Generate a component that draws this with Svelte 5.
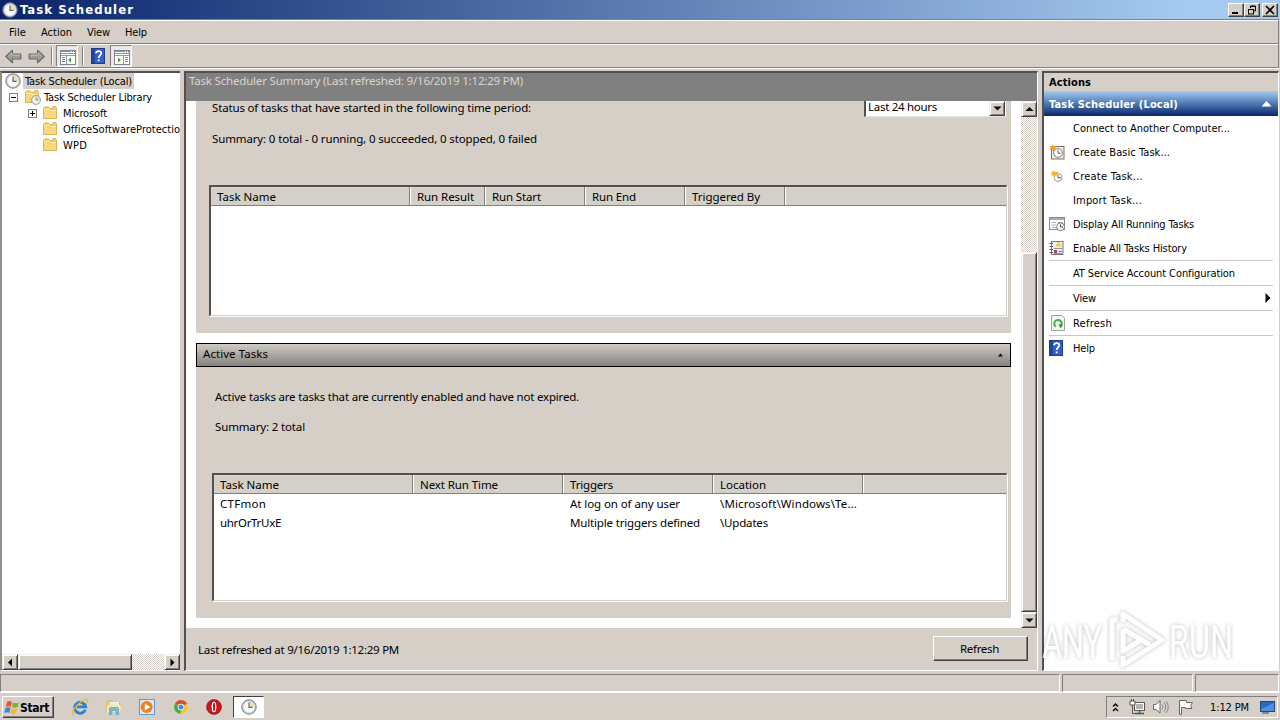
<script lang="ts">
    let selected = $state('Task Scheduler (Local)');

    const menus = [
        { label: 'File', w: 17 },
        { label: 'Action', w: 31 },
        { label: 'View', w: 23 },
        { label: 'Help', w: 22 }
    ];

    const folders = [
        { label: 'Microsoft', w: 44, plus: true },
        { label: 'OfficeSoftwareProtectio', w: 117, plus: false },
        { label: 'WPD', w: 24, plus: false }
    ];

    const statusCols = [
        { label: 'Task Name', w: 59, col: 199 },
        { label: 'Run Result', w: 57, col: 75 },
        { label: 'Run Start', w: 49, col: 100 },
        { label: 'Run End', w: 44, col: 100 },
        { label: 'Triggered By', w: 68, col: 100 }
    ];

    const activeCols = [
        { label: 'Task Name', w: 59, col: 199 },
        { label: 'Next Run Time', w: 78, col: 150 },
        { label: 'Triggers', w: 43, col: 150 },
        { label: 'Location', w: 46, col: 150 }
    ];

    const activeRows = [
        [{ t: 'CTFmon', w: 46 }, { t: '', w: 0 }, { t: 'At log on of any user', w: 110 }, { t: '\\Microsoft\\Windows\\Te...', w: 137 }],
        [{ t: 'uhrOrTrUxE', w: 61 }, { t: '', w: 0 }, { t: 'Multiple triggers defined', w: 130 }, { t: '\\Updates', w: 48 }]
    ];

    const actions = [
        { label: 'Connect to Another Computer...', w: 157, icon: '' },
        { label: 'Create Basic Task...', w: 97, icon: 'basic' },
        { label: 'Create Task...', w: 70, icon: 'create' },
        { label: 'Import Task...', w: 69, icon: '' },
        { label: 'Display All Running Tasks', w: 121, icon: 'running' },
        { label: 'Enable All Tasks History', w: 114, icon: 'history' },
        { label: 'AT Service Account Configuration', w: 162, icon: '', line: true },
        { label: 'View', w: 23, icon: '', line: true, sub: true },
        { label: 'Refresh', w: 39, icon: 'refresh', line: true },
        { label: 'Help', w: 22, icon: 'help', line: true }
    ];

    // tracks a label out (or in) so that it takes the given width
    function fit(node: HTMLElement, width: number) {
        const n = (node.textContent ?? '').length;
        if (!n || !width) return;
        const now = node.getBoundingClientRect().width;
        node.style.letterSpacing = (width - now) / n + 'px';
    }
</script>

{#snippet label(text, w)}<span class="label" use:fit={w}>{text}</span>{/snippet}

{#snippet clock(size)}
    <svg width={size} height={size} viewBox="0 0 16 16">
        <circle cx="8" cy="8" r="7.2" fill="#c3c8cd" stroke="#7b8188" stroke-width="1" />
        <circle cx="8" cy="8" r="5.6" fill="#f6f8fb" stroke="#dfe3e8" stroke-width=".7" />
        <path d="M8 8V2.6A5.4 5.4 0 0 1 13.4 8Z" fill="#f0dc9c" />
        <path d="M8 3.6V8.4H11.6" fill="none" stroke="#5c6a80" stroke-width="1.2" />
    </svg>
{/snippet}

{#snippet folder()}
    <svg width="16" height="16" viewBox="0 0 16 16">
        <path d="M1.5 3.5L2.5 2H6.5L7.5 3.5H10L11 1.5H13.5L14.5 3V13.5H1.5Z" fill="#f3cf72" stroke="#dcb358" />
        <path d="M2 6H14V13H2Z" fill="#fad882" />
        <path d="M2 4.5H8L9 5.5H14" fill="none" stroke="#fff0bd" />
    </svg>
{/snippet}

{#snippet help()}
    <svg width="14" height="16" viewBox="0 0 14 16">
        <rect x=".5" y=".5" width="13" height="15" fill="#355fc7" stroke="#1e3c8c" />
        <path d="M1 1H4V15H1Z" fill="#2346a1" />
        <path d="M5 5.3C5 2.4 10.2 2.4 10.2 5.4C10.2 7.5 7.7 7.3 7.7 10M7.7 11.4V13.2" fill="none" stroke="#fff" stroke-width="1.8" />
    </svg>
{/snippet}

{#snippet arrow(flip)}
    <svg class:flip width="17" height="15" viewBox="0 0 17 15">
        <path d="M.8 7.5L7.5 1.3V5H15.8V10H7.5V13.7Z" fill="#9b9b99" stroke="#6c6c6b" stroke-width="1.2" stroke-linejoin="round" />
        <path d="M3 7.3L6.8 3.8V6.2H15" fill="none" stroke="#bdbdbb" />
    </svg>
{/snippet}

{#snippet panes(right)}
    <svg width="16" height="15" viewBox="0 0 16 15">
        <rect x=".5" y=".5" width="15" height="14" fill="#fff" stroke="#7d8798" />
        <path d="M1 1.5H11M1 3.5H15" stroke="#7c91b4" />
        <path d="M12 1.5H15" stroke="#4a5f86" stroke-dasharray="1" />
        {#if right}
            <path d="M9.5 5V14M1 5.5H15" stroke="#8e9aab" />
            <path d="M4 7.5L7 10L4 12.5Z" fill="#4f9d33" />
            <path d="M11 7.5H14M11 9.5H14M11 11.5H14" stroke="#6287c2" />
        {:else}
            <path d="M6.5 5V14M1 5.5H15" stroke="#8e9aab" />
            <path d="M11 7.5L8 10L11 12.5Z" fill="#4f9d33" />
            <path d="M2 7.5H5M2 9.5H5M2 11.5H5" stroke="#6287c2" />
        {/if}
    </svg>
{/snippet}

{#snippet tri(dir)}
    <svg width="9" height="9" viewBox="0 0 9 9">
        {#if dir === 'up'}<path d="M4.5 2L8.5 6H.5Z" />
        {:else if dir === 'down'}<path d="M.5 2.5H8.5L4.5 6.5Z" />
        {:else if dir === 'left'}<path d="M2 4.5L6 .5V8.5Z" />
        {:else}<path d="M6.5 4.5L2.5 .5V8.5Z" />{/if}
    </svg>
{/snippet}

{#snippet actionIcon(name)}
    {#if name === 'basic'}
        <svg width="16" height="16" viewBox="0 0 16 16">
            <rect x="2.5" y="2.5" width="12.5" height="12.5" fill="#ece9e4" stroke="#8a6d5e" />
            <circle cx="9" cy="9" r="4.3" fill="#fff" stroke="#7b858f" />
            <path d="M9 6.3V9.3H11.5" fill="none" stroke="#4c5563" />
            <path d="M3.5 0L4.6 2.4L7 1.5L6 3.8L8 5.2L5.3 5.4L4.5 8L3 5.6L.3 6L1.8 3.8L.2 1.6L2.8 2.3Z" fill="#f0a12b" />
        </svg>
    {:else if name === 'create'}
        <svg width="16" height="16" viewBox="0 0 16 16">
            <circle cx="9" cy="9.5" r="4" fill="#f4f5f7" stroke="#9aa1a9" />
            <path d="M9 7V9.7H12" fill="none" stroke="#58616e" />
            <path d="M5 2L6 4.2L9.5 3.7L8 5.7L9 7.5L6.4 7.2L5.3 9.6L4.2 7.3L1.8 7.6L3.2 5.6L2 3.6L4.3 4Z" fill="#f2ad2e" />
        </svg>
    {:else if name === 'running'}
        <svg width="17" height="16" viewBox="0 0 17 16">
            <rect x=".5" y="1.5" width="15" height="12" fill="#fff" stroke="#858a91" />
            <path d="M1 3H15" stroke="#a8adb5" stroke-width="2" />
            <path d="M2.5 6.5H7M2.5 9H7M2.5 11.5H7M9 6.5H14" stroke="#aab0b8" />
            <circle cx="11.5" cy="10.8" r="3.9" fill="#f4f5f7" stroke="#7c828b" />
            <path d="M11.5 8.3V11H14" fill="none" stroke="#4f5661" />
        </svg>
    {:else if name === 'history'}
        <svg width="15" height="16" viewBox="0 0 15 16">
            <rect x="2.5" y="1.5" width="11.5" height="13" fill="#e9edf5" stroke="#6f7b93" />
            <path d="M.5 3.5H4M.5 6.5H4M.5 9.5H4M.5 12.5H4" stroke="#555f72" />
            <path d="M9.5 1.5L13 6.5H6Z" fill="#f1cf3c" />
            <path d="M5 8.5H13M5 13.5H13" stroke="#7f94c2" />
            <rect x="5" y="10" width="3" height="3" fill="#ba3f36" />
            <path d="M9.5 11.5H13" stroke="#5e79b7" />
        </svg>
    {:else if name === 'refresh'}
        <svg class="page" width="14" height="16" viewBox="0 0 14 16">
            <path d="M.5 .5H11L13.5 3V15.5H.5Z" fill="#f2f5f1" stroke="#9ba39b" />
            <path d="M4.8 11.6A3.7 3.7 0 1 1 9.4 11.4" fill="none" stroke="#4cad48" stroke-width="2" />
            <path d="M7.5 9.2L12 9.5L9.7 13.4Z" fill="#38963a" />
        </svg>
    {:else if name === 'help'}
        {@render help()}
    {/if}
{/snippet}

<div class="screen">
    <div class="titlebar">
        {@render clock(16)}
        <b>{@render label('Task Scheduler', 114)}</b>
        <div class="winbtns">
            <button aria-label="Minimize"><svg width="12" height="10" viewBox="0 0 12 10"><path d="M2 8H8" stroke="#000" stroke-width="2" /></svg></button>
            <button aria-label="Restore"><svg width="12" height="10" viewBox="0 0 12 10"><path d="M4.5 3V1H9.5V6H8M4 1.5H10M2 4.5H8" fill="none" stroke="#000" /><rect x="2.5" y="4.5" width="5" height="4.5" fill="none" stroke="#000" /></svg></button>
            <button class="close" aria-label="Close"><svg width="12" height="10" viewBox="0 0 12 10"><path d="M2 1L10 9M10 1L2 9" stroke="#000" stroke-width="1.6" /></svg></button>
        </div>
    </div>

    <div class="menubar">
        {#each menus as m}{@render label(m.label, m.w)}{/each}
    </div>

    <div class="toolbar">
        {@render arrow(false)}
        {@render arrow(true)}
        <i class="sep"></i>
        <span class="pressed">{@render panes(false)}</span>
        <i class="sep second"></i>
        <span class="helpbtn">{@render help()}</span>
        <span class="pressed">{@render panes(true)}</span>
    </div>

    <div class="panes">
        <div class="tree">
            <div class="nodes">
                <div class="node root" class:selected={selected === 'Task Scheduler (Local)'}>
                    {@render clock(16)}
                    <span class="name">{@render label('Task Scheduler (Local)', 107)}</span>
                </div>
                <div class="node library">
                    <span class="expander"><svg width="9" height="9" viewBox="0 0 9 9"><rect x=".5" y=".5" width="8" height="8" fill="#fff" stroke="#808080" /><path d="M2 4.5H7" stroke="#000" /></svg></span>
                    <span class="libicon">
                        {@render folder()}
                        <span class="mini">{@render clock(10)}</span>
                    </span>
                    {@render label('Task Scheduler Library', 108)}
                </div>
                {#each folders as f}
                    <div class="node child">
                        <span class="expander">
                            {#if f.plus}<svg width="9" height="9" viewBox="0 0 9 9"><rect x=".5" y=".5" width="8" height="8" fill="#fff" stroke="#808080" /><path d="M2 4.5H7M4.5 2V7" stroke="#000" /></svg>{/if}
                        </span>
                        {@render folder()}
                        <span class="name">{@render label(f.label, f.w)}</span>
                    </div>
                {/each}
            </div>
            <div class="hscroll">
                <span class="sbtn">{@render tri('left')}</span>
                <span class="hthumb"></span>
                <span class="track"></span>
                <span class="sbtn">{@render tri('right')}</span>
            </div>
        </div>

        <div class="center">
            <div class="summary-head">{@render label('Task Scheduler Summary (Last refreshed: 9/16/2019 1:12:29 PM)', 334)}</div>
            <div class="scrollarea">
                <div class="sections">
                    <section class="status">
                        <div class="period">
                            {@render label('Status of tasks that have started in the following time period:', 319)}
                            <div class="combo">
                                {@render label('Last 24 hours', 69)}
                                <span class="sbtn drop">{@render tri('down')}</span>
                            </div>
                        </div>
                        <p>{@render label('Summary: 0 total - 0 running, 0 succeeded, 0 stopped, 0 failed', 325)}</p>
                        <div class="list">
                            <div class="list-head">
                                {#each statusCols as c}
                                    <div class="th" style:width="{c.col}px">{@render label(c.label, c.w)}</div>
                                {/each}
                            </div>
                        </div>
                    </section>

                    <div class="section-bar">
                        {@render label('Active Tasks', 65)}
                        <svg width="7" height="4" viewBox="0 0 7 4"><path d="M3.5 .5L6 3.5H1Z" /></svg>
                    </div>

                    <section class="active">
                        <p>{@render label('Active tasks are tasks that are currently enabled and have not expired.', 364)}</p>
                        <p>{@render label('Summary: 2 total', 90)}</p>
                        <div class="list">
                            <div class="list-head">
                                {#each activeCols as c}
                                    <div class="th" style:width="{c.col}px">{@render label(c.label, c.w)}</div>
                                {/each}
                            </div>
                            {#each activeRows as row}
                                <div class="row">
                                    {#each row as cell, i}
                                        <div class="td" style:width="{activeCols[i].col}px">{@render label(cell.t, cell.w)}</div>
                                    {/each}
                                </div>
                            {/each}
                        </div>
                    </section>
                </div>
                <div class="vscroll">
                    <span class="sbtn">{@render tri('up')}</span>
                    <span class="track"></span>
                    <span class="vthumb"></span>
                    <span class="sbtn">{@render tri('down')}</span>
                </div>
            </div>
            <div class="foot">
                {@render label('Last refreshed at 9/16/2019 1:12:29 PM', 201)}
                <button class="refresh">{@render label('Refresh', 39)}</button>
            </div>
        </div>

        <div class="actions">
            <div class="actions-head"><b>{@render label('Actions', 42)}</b></div>
            <div class="actions-group">
                <b>{@render label('Task Scheduler (Local)', 129)}</b>
                <svg width="11" height="6" viewBox="0 0 11 6"><path d="M5.5 0L10.5 5.5H.5Z" fill="#fff" /></svg>
            </div>
            {#each actions as a}
                <div class="action" class:line={a.line}>
                    <span class="aicon">{@render actionIcon(a.icon)}</span>
                    {@render label(a.label, a.w)}
                    {#if a.sub}<svg class="sub" width="6" height="10" viewBox="0 0 6 10"><path d="M.5 0L5.5 5L.5 10Z" /></svg>{/if}
                </div>
            {/each}
            <svg class="watermark" width="196" height="64" viewBox="0 0 196 64">
                <text x="1" y="50" textLength="60" lengthAdjust="spacingAndGlyphs">ANY</text>
                <path d="M76 12H71V52M82 14V6L121 32L82 57V48M82 21L109 37M82 21V43L100 32" />
                <text x="128" y="50" textLength="64" lengthAdjust="spacingAndGlyphs">RUN</text>
            </svg>
        </div>
    </div>

    <div class="statusbar"><span></span><span></span><span></span></div>

    <div class="taskbar">
        <button class="start">
            <svg width="16" height="15" viewBox="0 0 16 15">
                <path d="M3 2C5 .6 6.5 1 8 2L6.8 7C5.2 6 3.7 6 1.8 7Z" fill="#e8582a" />
                <path d="M9 2.4C11 3.5 13 3.4 15 2.2L13.6 7C11.8 8 9.8 8 7.9 7.2Z" fill="#79b52e" />
                <path d="M1.5 8C3.3 6.8 5 7 6.5 8L5.3 13C3.8 12 2 12 .2 13Z" fill="#3b84d8" />
                <path d="M7.6 8.4C9.5 9.4 11.4 9.3 13.3 8.2L12 13C10.2 14.2 8.2 14.1 6.3 13.3Z" fill="#f6bb22" />
            </svg>
            <b>{@render label('Start', 29)}</b>
        </button>
        <div class="quick">
            <svg width="18" height="18" viewBox="0 0 18 18">
                <path d="M14.3 11.8A5.5 5.5 0 1 1 14.6 8.9H6" fill="none" stroke="#2b83d3" stroke-width="2.9" />
                <path d="M2.5 16.5C-1.5 14 10 1.5 15.8 1.4C17.5 1.6 16.8 3.5 16 5" fill="none" stroke="#e9b932" stroke-width="1.4" />
            </svg>
            <svg width="18" height="18" viewBox="0 0 18 18">
                <path d="M2 3H7L8.5 5H15V14H2Z" fill="#f3d77b" stroke="#d8ae4e" />
                <path d="M5 4H14V7H5Z" fill="#e9f3dc" />
                <path d="M2 7.5H16L15.5 14.5H2Z" fill="#fbeaa5" />
                <path d="M4.5 16.5V11Q4.5 9.5 6 9.5H12Q13.5 9.5 13.5 11V16.5H11V12.5H7V16.5Z" fill="#76bbe4" stroke="#5198c6" stroke-width=".7" />
            </svg>
            <svg width="18" height="18" viewBox="0 0 18 18">
                <rect x="1.5" y="1.5" width="15" height="15" fill="#d8e8f7" stroke="#5d9bd2" />
                <circle cx="8.7" cy="9" r="6" fill="#ee8220" />
                <path d="M6.8 5.5L12.4 9L6.8 12.5Z" fill="#fff" />
            </svg>
            <svg width="18" height="18" viewBox="0 0 18 18">
                <circle cx="9" cy="9" r="6.8" fill="#f4c52e" />
                <path d="M9 9L3 5.7A6.8 6.8 0 0 1 15 5.7Z" fill="#dd4b3c" />
                <path d="M9 9L3 5.7A6.8 6.8 0 0 0 8.5 15.8Z" fill="#4ba755" />
                <circle cx="9" cy="9" r="3.3" fill="#fff" />
                <circle cx="9" cy="9" r="2.5" fill="#4688e8" />
            </svg>
            <svg width="18" height="18" viewBox="0 0 18 18">
                <circle cx="9" cy="9" r="7.5" fill="#c9151d" stroke="#8f1117" stroke-width=".6" />
                <ellipse cx="9" cy="9" rx="2.4" ry="5.3" fill="#fff" />
                <ellipse cx="9" cy="9" rx="1" ry="4.2" fill="#b41118" />
            </svg>
        </div>
        <div class="task">{@render clock(16)}</div>
        <div class="tray">
            <svg width="7" height="11" viewBox="0 0 7 11"><path d="M1 4.5L3.5 2L6 4.5M1 9L3.5 6.5L6 9" fill="none" stroke="#000" stroke-width="1.4" /></svg>
            <svg class="net" width="17" height="16" viewBox="0 0 17 16">
                <rect x="5.5" y="3.5" width="10" height="8" fill="#b4b4b4" stroke="#555" />
                <rect x="6.5" y="4.5" width="8" height="6" fill="none" stroke="#fff" />
                <path d="M6 14.5H15M10.5 12V14" stroke="#555" stroke-width="1.4" />
                <path d="M1 2H6V6H1Z" fill="#fff" stroke="#555" />
                <path d="M2.5 0V2M4.5 0V2M3.5 6V14.5H7" fill="none" stroke="#555" />
            </svg>
            <svg class="vol" width="17" height="16" viewBox="0 0 17 16">
                <path d="M1.5 5.5H4L8 1.5V14L4 10.5H1.5Z" fill="#fff" stroke="#666" />
                <path d="M10 5.5Q12 8 10 10.5M12 3.5Q15.5 8 12 12.5M14 2Q18.5 8 14 14" fill="none" stroke="#888" />
            </svg>
            <svg class="flag" width="17" height="16" viewBox="0 0 17 16">
                <path d="M2.5 15.5V1.5H9.5V3.5H15.5L13.5 6.5L15 9.5H8.5V8.5H4.5V15.5Z" fill="#fff" stroke="#666" />
            </svg>
            {@render label('1:12 PM', 39)}
            <svg class="desk" width="15" height="13" viewBox="0 0 15 13">
                <rect x=".5" y=".5" width="14" height="10" fill="#2b6ac4" stroke="#27477b" />
                <path d="M1 8L14 2V10H1Z" fill="#4c92e0" />
                <path d="M2 12H9" stroke="#27477b" />
            </svg>
        </div>
    </div>
</div>

<style>
    :global(body) { margin: 0; background: #d4d0c8; }

    * { box-sizing: border-box; }
    svg { display: block; flex: none; }
    p { margin: 0; }
    button { padding: 0; margin: 0; font: inherit; color: #000; border-radius: 0; }
    b { display: flex; }

    .screen {
        --face: #d5cfc8;
        --ui: "DejaVu Sans Condensed", "DejaVu Sans", sans-serif;
        width: 1280px; height: 720px; overflow: hidden;
        display: flex; flex-direction: column;
        background: var(--face); color: #000;
        font: 11px/14px var(--ui); font-stretch: condensed;
    }
    .label { display: inline-block; white-space: nowrap; flex: none; padding-top: 2px; }
    .center .label { padding-top: 0; }
    .flip { transform: scaleX(-1); }

    /* title, menu and tool bars */
    .titlebar { height: 19px; flex: none; display: flex; align-items: center; gap: 2px; padding: 0 2px; color: #fff; font-size: 13px; background: linear-gradient(90deg, #0a246a, #a6caf0 93%); }
    .titlebar b { margin-top: -1px; }
    .winbtns { margin-left: auto; display: flex; }
    .winbtns button, .start, .refresh { background: var(--face); border: 1px solid; border-color: #fff #404040 #404040 #fff; box-shadow: inset -1px -1px #808080; }
    .winbtns button { width: 16px; height: 14px; padding: 1px; }
    .winbtns .close { margin-left: 2px; }

    .menubar { height: 25px; flex: none; display: flex; align-items: center; gap: 15px; padding-left: 9px; border: 1px solid #808080; border-width: 1px 1px 1px 0; box-shadow: inset 0 1px #fff; margin-right: 1px; }
    .toolbar { height: 24px; flex: none; display: flex; align-items: center; padding-left: 5px; border: 1px solid #808080; border-width: 0 1px 1px 0; box-shadow: inset 0 1px #fff, 0 1px #fff; margin-right: 1px; }
    .toolbar > .flip { margin-left: 6px; }
    .toolbar > svg { margin-top: 1px; }
    .sep { width: 2px; height: 18px; margin: 0 3px 0 6px; border-left: 1px solid #808080; border-right: 1px solid #fff; }
    .sep.second { margin: 0 7px 0 4px; }
    .pressed { width: 22px; height: 22px; padding: 4px 2px 0 3px; border: 1px solid; border-color: #808080 #fff #fff #808080; background: #ebe7e3; }
    .helpbtn { margin-right: 5px; }

    .panes { height: 604px; flex: none; padding: 3px 1px 1px 0; display: flex; gap: 4px; }
    .tree, .center, .actions { border: solid; border-width: 2px 1px 1px 2px; border-color: #55504f #fff #fff #55504f; }

    /* console tree */
    .tree { width: 180px; flex: none; display: flex; flex-direction: column; background: #fff; border-left-width: 2px; border-left-color: #918c88; border-right-width: 0; }
    .nodes { flex: 1; overflow: hidden; }
    .node { height: 16px; display: flex; align-items: center; white-space: nowrap; overflow: hidden; }
    .root { padding-left: 3px; gap: 2px; }
    .name { display: flex; }
    .root .name { padding: 0 2px; }
    .selected .name { background: #d5cfc8; }
    .library { padding-left: 7px; }
    .child { padding-left: 26px; }
    .expander { width: 9px; flex: none; margin-right: 5px; }
    .library .expander { margin-right: 6px; }
    .libicon { position: relative; margin-right: 4px; }
    .mini { position: absolute; left: 7px; top: 6px; }
    .child .name { margin-left: 5px; }

    /* scroll bars */
    .sbtn, .hthumb, .vthumb { background: var(--face); border: 1px solid; border-color: #f2efec #404040 #404040 #f2efec; box-shadow: inset 1px 1px #fff, inset -1px -1px #808080; }
    .sbtn { width: 16px; height: 16px; flex: none; display: flex; align-items: center; justify-content: center; }
    .track { flex: 1; background: repeating-conic-gradient(#fff 0 25%, #d5cfc8 0 50%) 0 0 / 2px 2px; }
    .hscroll { height: 16px; flex: none; display: flex; }
    .hthumb { width: 114px; }
    .vscroll { width: 16px; flex: none; display: flex; flex-direction: column; }
    .vthumb { height: 360px; flex: none; }

    /* middle pane */
    .center { width: 854px; flex: none; display: flex; flex-direction: column; font: 11.5px/15px "Noto Sans", "Open Sans", sans-serif; }
    .summary-head { height: 28px; flex: none; padding: 0 0 0 3px; background: #808080; color: #d9d5d0; }
    .scrollarea { height: 527px; flex: none; display: flex; background: #fff; }
    .sections { flex: 1; padding: 0 10px; display: flex; flex-direction: column; }
    section { background: var(--face); display: flex; flex-direction: column; }
    .status { height: 232px; padding: 0 4px 17px 13px; }
    .period { height: 30px; display: flex; align-items: flex-start; justify-content: space-between; padding: 0 1px 0 3px; }
    .period > .label { margin-top: -1px; }
    .combo { width: 142px; height: 16px; padding: 0 0 0 2px; display: flex; justify-content: space-between; background: #fff; border: solid; border-width: 0 1px 1px 2px; border-color: #fff #fff #e8e4e0 #55504f; line-height: 12px; }
    .drop { height: 15px; }
    .status p { height: 54px; padding-left: 3px; }
    .status .list { height: 131px; }
    .section-bar { height: 24px; flex: none; margin-top: 10px; padding: 0 6px; display: flex; align-items: center; justify-content: space-between; border: 1px solid #000; background: linear-gradient(#d0cbc5, #85817d); }
    .section-bar > .label { margin-top: -3px; }
    .active { height: 251px; padding: 22px 4px 16px 16px; }
    .active p { height: 30px; padding-left: 3px; }
    .active p + p { height: 54px; }
    .active .list { height: 128px; }

    .list { flex: none; background: #fff; border: solid; border-width: 2px 1px 1px 2px; border-color: #55504f #d5cfc8 #d5cfc8 #55504f; box-shadow: 1px 1px #fff; }
    .list-head { height: 19px; display: flex; background: #d4d0c8; border-bottom: 1px solid #808080; box-shadow: inset 0 1px #ded9d3; }
    .th { padding: 2px 0 0 7px; border-right: 1px solid #808080; box-shadow: 1px 0 #fff; }
    .row { height: 19px; display: flex; }
    .td { padding: 2px 0 0 7px; }
    .th:first-child, .td:first-child { padding-left: 6px; }

    .foot { flex: 1; display: flex; align-items: center; justify-content: space-between; padding: 0 9px 0 12px; }
    .refresh { width: 95px; height: 25px; margin-top: -1px; padding-right: 2px; }

    /* actions pane */
    .actions { flex: 1; position: relative; background: #fff; }
    .actions-head { height: 18px; padding: 1px 0 0 5px; background: #d5cfc8; }
    .actions-group { height: 25px; display: flex; align-items: center; justify-content: space-between; padding: 1px 6px 0 5px; color: #fff; background: linear-gradient(#a6caf0, #5782bb 45%, #0a246a); }
    .action { height: 24px; display: flex; align-items: center; margin: 0 5px; }
    .action.line { height: 25px; border-top: 1px solid #c9c6c3; }
    .aicon { width: 24px; height: 16px; flex: none; }
    .page { margin-left: 2px; }
    .sub { margin-left: auto; margin-right: 2px; }
    .watermark { position: absolute; left: -3px; top: 535px; overflow: visible; filter: drop-shadow(0 0 2px rgba(0, 0, 0, .35)); opacity: .75; }
    .watermark text { font: 47px Roboto, sans-serif; fill: #fff; }
    .watermark path { fill: none; stroke: #fff; stroke-width: 5; stroke-linejoin: round; }

    .statusbar { height: 21px; flex: none; padding: 2px 1px 0 0; display: flex; gap: 2px; border-bottom: 1px solid #fff; }
    .statusbar span { height: 18px; border: 1px solid; border-color: #808080 #fff #fff #808080; }
    .statusbar span:nth-child(1) { width: 1060px; }
    .statusbar span:nth-child(2) { width: 131px; }
    .statusbar span:nth-child(3) { flex: 1; }

    /* taskbar */
    .taskbar { flex: 1; display: flex; align-items: flex-start; padding: 3px 2px 0; }
    .start { width: 52px; height: 22px; display: flex; align-items: center; padding-left: 1px; font-size: 12px; }
    .quick { display: flex; gap: 15.5px; padding: 2px 0 0 17px; }
    .task { width: 31px; height: 22px; margin-left: 10px; padding: 2px 0 0 7px; background: #fff; border: 1px solid; border-color: #404040 #fff #fff #404040; }
    .tray { margin-left: auto; width: 172px; height: 22px; display: flex; align-items: center; padding: 0 2px 0 5px; border: 1px solid; border-color: #808080 #fff #fff #808080; }
    .net { margin-left: 10px; }
    .vol { margin-left: 6px; }
    .flag { margin-left: 8px; margin-right: 16px; }
    .desk { margin-left: auto; }
</style>
